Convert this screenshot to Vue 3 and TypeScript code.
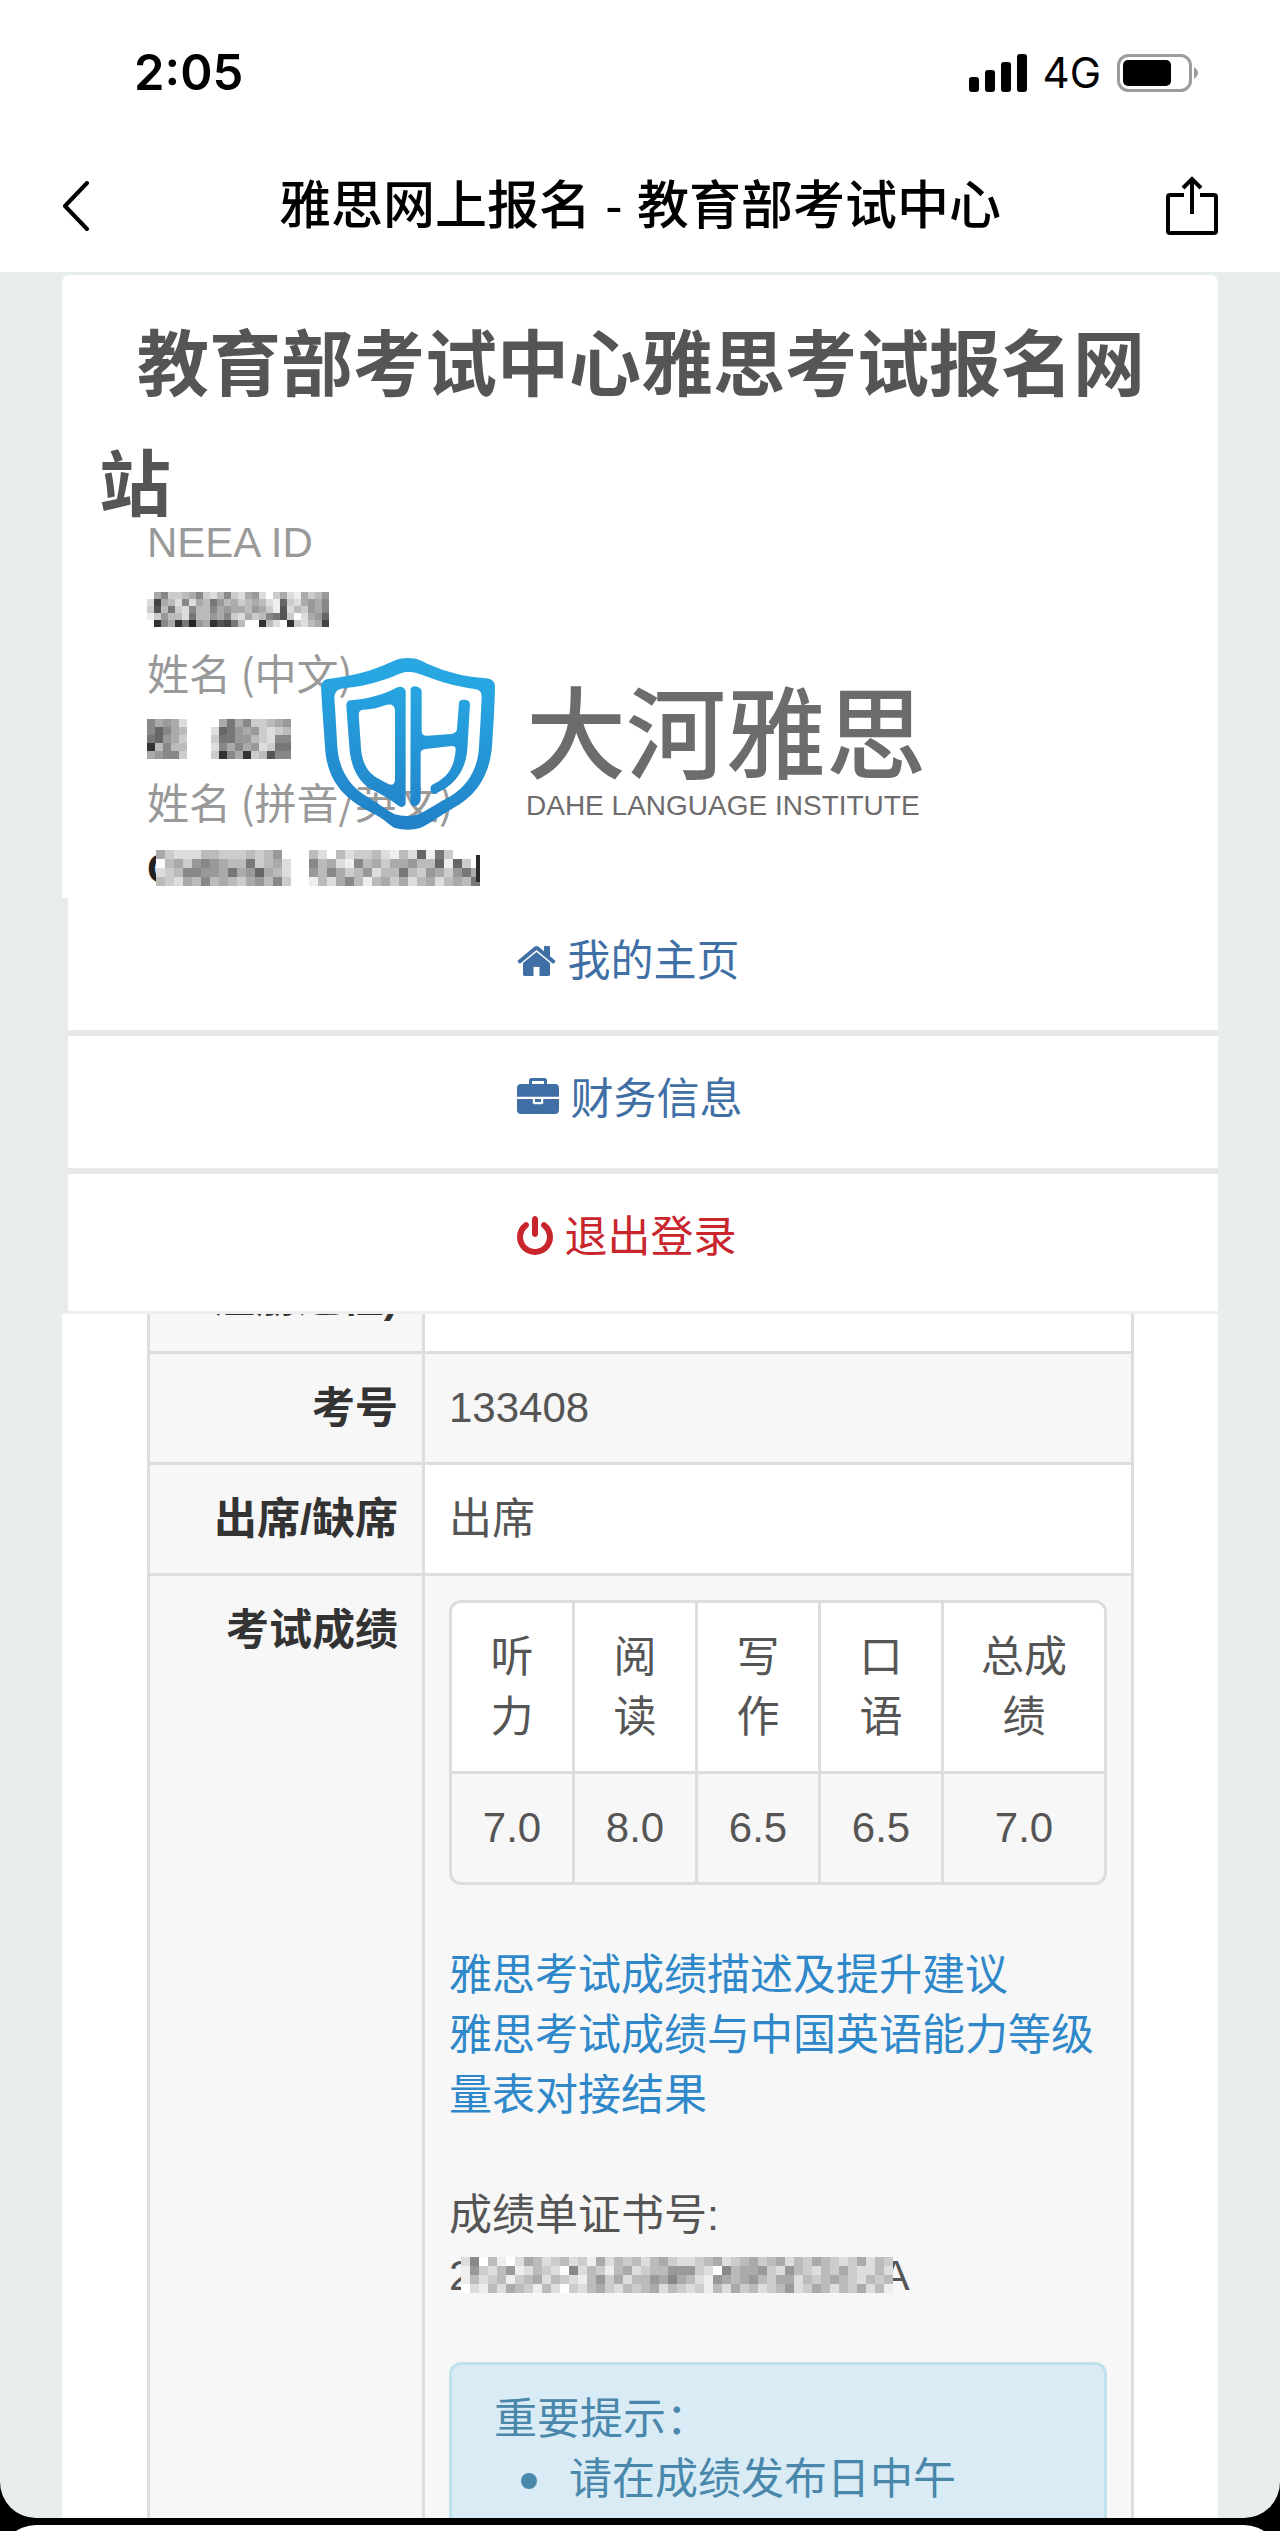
<script setup lang="ts">
interface MenuItem {
  label: string
  icon: string
  box: string
  width: number
  danger?: boolean
}

interface MosaicBlock {
  cell: number
  rows: string[]
}

const menu: MenuItem[] = [
  {
    label: '我的主页',
    box: '64 0 1664 1792',
    width: 39,
    icon: 'M1472 992v480q0 26-19 45t-45 19h-384v-384h-256v384h-384q-26 0-45-19t-19-45v-480q0-1 .5-3t.5-3l575-474 575 474q1 2 1 6zm223-69l-62 74q-8 9-21 11h-3q-13 0-21-7l-692-577-692 577q-12 8-24 7-13-2-21-11l-62-74q-8-10-7-23.5t11-21.5l719-599q32-26 76-26t76 26l244 204v-195q0-14 9-23t23-9h192q14 0 23 9t9 23v408l219 182q10 8 11 21.5t-7 23.5z',
  },
  {
    label: '财务信息',
    box: '0 0 1792 1792',
    width: 42,
    icon: 'M640 256h512v-128h-512v128zm1152 640v480q0 66-47 113t-113 47h-1472q-66 0-113-47t-47-113v-480h672v160q0 26 19 45t45 19h320q26 0 45-19t19-45v-160h672zm-768 0v128h-256v-128h256zm768-480v384h-1792v-384q0-66 47-113t113-47h352v-160q0-40 28-68t68-28h576q40 0 68 28t28 68v160h352q66 0 113 47t47 113z',
  },
  {
    label: '退出登录',
    box: '128 0 1536 1792',
    width: 36,
    danger: true,
    icon: 'M1664 896q0 156-61 298t-164 245-245 164-298 61-298-61-245-164-164-245-61-298q0-182 80.500-343t226.500-270q43-32 95.500-25t83.500 50q32 42 24.500 94.500t-49.500 84.500q-98 74-151.500 181t-53.500 228q0 104 40.500 198.500t109.500 163.500 163.500 109.500 198.500 40.500 198.500-40.500 163.500-109.500 109.500-163.500 40.500-198.500q0-121-53.500-228t-151.500-181q-42-32-49.500-84.500t24.500-94.500q31-43 84-50t95 25q146 109 226.500 270t80.500 343zm-640-768v640q0 52-38 90t-90 38-90-38-38-90v-640q0-52 38-90t90-38 90 38 38 90z',
  },
]

const scores = [
  { name: '听力', value: '7.0' },
  { name: '阅读', value: '8.0' },
  { name: '写作', value: '6.5' },
  { name: '口语', value: '6.5' },
  { name: '总成绩', value: '7.0' },
]

// Each character is a grey level from 0 (black) to f (white); "." leaves the cell empty.
const idMask: MosaicBlock = {
  cell: 7,
  rows: [
    '.a8ccba8cdb8cda9dfcadeacb9',
    'd4abd8dab79bacbabde6cda9a8',
    'c5b7cd8bb8a9aab9ace5dbc9a8',
    'ec9bbd7bb9a8cdacb875cfda96',
    '.38a3729a3547b.f3bdf3cdba4',
  ],
}
const nameMask: MosaicBlock = {
  cell: 8,
  rows: ['8a9ad..a7a8ccba9', '868ab.d679a9cdcb', '769ac.c7799bcd88', '3b8bb.d8a8a9dc77', 'a988c.c38a3cb588'].map(
    (row) => row.replace('.', '...'),
  ),
}
const pinyinMask: MosaicBlock = {
  cell: 9,
  rows: [
    'acdddbbcccbcb9f.fbdfbdccbdebd6e7c..',
    'fbac989abb7cbad.f8bade8bacaa9bb6e6c.',
    'dcb8899a7a96abd.f9b8acb9dbb7bc9ac97a',
    'bcdab8babca9b8c.febda8bebacadbadbab7',
  ],
}
const certMask: MosaicBlock = {
  cell: 9,
  rows: [
    'd8fbefdabdcbdceadbcbdbacddcbadcbacbadbcabcdcadbc',
    'e9cdb9edbcdf8dbcebadcbb999cdf8baa9cd9bcdbcacddbd',
    'ebdcbecbadbcdeb9cadbb9a8abde9aba9bcaadbcbabcdbcb',
    'fdebdabcebdfcdbacdbcbadbcdcebdacbdcb9dcabdbcadbe',
  ],
}

const shade = (c: string): string => `#${c.repeat(6)}`
const cells = (block: MosaicBlock) =>
  block.rows.flatMap((row, y) =>
    [...row].flatMap((c, x) => (c === '.' ? [] : [{ key: `${x}-${y}`, x, y, fill: shade(c) }])),
  )
const columns = (block: MosaicBlock): number => Math.max(...block.rows.map((r) => r.length))
</script>

<template>
  <div class="phone">
    <header class="top">
      <div class="status">
        <span class="time">2:05</span>
        <span class="indicators">
          <svg class="signal" viewBox="0 0 58 38" aria-hidden="true">
            <rect x="0" y="23" width="10" height="15" rx="3" />
            <rect x="16" y="16" width="10" height="22" rx="3" />
            <rect x="32" y="8" width="10" height="30" rx="3" />
            <rect x="48" y="0" width="10" height="38" rx="3" />
          </svg>
          <span class="network">4G</span>
          <svg class="battery" viewBox="0 0 82 38" aria-hidden="true">
            <rect x="1.500" y="1.500" width="72" height="35" rx="10" fill="none" stroke="#9c9c9c" stroke-width="3" />
            <rect x="6" y="6" width="48" height="26" rx="5" />
            <path d="M77 13q8 6 0 12z" fill="#9c9c9c" />
          </svg>
        </span>
      </div>
      <nav class="bar">
        <button type="button" aria-label="返回">
          <svg width="28" height="50" viewBox="0 0 28 50"><path d="M25 2L3 25l22 23" fill="none" stroke="#000" stroke-width="4" stroke-linecap="round" stroke-linejoin="round" /></svg>
        </button>
        <h1>雅思网上报名 - 教育部考试中心</h1>
        <button type="button" aria-label="分享">
          <svg width="52" height="60" viewBox="0 0 52 60">
            <path d="M18 19H4q-2 0-2 2v34q0 2 2 2h44q2 0 2-2V21q0-2-2-2H34M26 38V3M17 12l9-9 9 9" fill="none" stroke="#000" stroke-width="4" />
          </svg>
        </button>
      </nav>
    </header>

    <main class="page">
      <section class="panel">
        <h2>教育部考试中心雅思考试报名网站</h2>
        <dl>
          <dt>NEEA ID</dt>
          <dd>
            <svg :width="columns(idMask) * idMask.cell" :height="idMask.rows.length * idMask.cell" :viewBox="`0 0 ${columns(idMask)} ${idMask.rows.length}`" shape-rendering="crispEdges" aria-hidden="true">
              <rect v-for="c in cells(idMask)" :key="c.key" :x="c.x" :y="c.y" width="1" height="1" :fill="c.fill" />
            </svg>
          </dd>
          <dt class="cjk">姓名 (中文)</dt>
          <dd>
            <svg :width="columns(nameMask) * nameMask.cell" :height="nameMask.rows.length * nameMask.cell" :viewBox="`0 0 ${columns(nameMask)} ${nameMask.rows.length}`" shape-rendering="crispEdges" aria-hidden="true">
              <rect v-for="c in cells(nameMask)" :key="c.key" :x="c.x" :y="c.y" width="1" height="1" :fill="c.fill" />
            </svg>
          </dd>
          <dt class="cjk">姓名 (拼音/英文)</dt>
          <dd>
            <span class="peek">C</span>
            <svg class="cover" :width="columns(pinyinMask) * pinyinMask.cell" :height="pinyinMask.rows.length * pinyinMask.cell" :viewBox="`0 0 ${columns(pinyinMask)} ${pinyinMask.rows.length}`" shape-rendering="crispEdges" aria-hidden="true">
              <rect v-for="c in cells(pinyinMask)" :key="c.key" :x="c.x" :y="c.y" width="1" height="1" :fill="c.fill" />
              <rect x="35.500" y="0.500" width="0.500" height="3" fill="#2b2b2b" />
            </svg>
          </dd>
        </dl>

        <div class="brand">
          <svg class="shield" viewBox="664 234 522 516" aria-hidden="true">
            <defs>
              <linearGradient id="shieldFill" gradientUnits="userSpaceOnUse" x1="960" y1="234" x2="900" y2="750">
                <stop offset="0.150" stop-color="#27a6e2" />
                <stop offset="1" stop-color="#2180c6" />
              </linearGradient>
            </defs>
            <g fill="url(#shieldFill)" fill-rule="evenodd">
              <path d="M925 234C955 234 965 243 985 252C1040 276 1090 290 1160 295Q1187 298 1186 322C1184 400 1181 440 1177 500C1170 580 1135 645 1060 685C1020 708 990 732 962 744Q925 755 885 744C868 735 850 715 820 700C740 660 682 610 676 500C672 440 668 390 664 322Q664 298 690 296C760 288 820 272 880 244Q900 234 925 234ZM925 276C905 276 895 284 875 292C820 312 780 320 725 326Q704 330 704 352C708 410 710 450 713 500C718 570 750 620 805 652C840 672 860 690 885 703Q925 714 962 701C990 685 1020 665 1050 650C1110 615 1135 560 1138 500C1142 440 1144 400 1146 348Q1146 330 1125 327C1070 320 1030 308 970 286C955 280 945 276 925 276Z" />
              <path d="M752 361C800 358 850 345 893 322Q910 315 918 332V672Q912 686 897 678C875 660 840 640 810 625C770 600 752 550 749 500L740 378Q740 362 752 361ZM790 389C815 388 840 382 862 374Q884 370 886 390V600Q884 618 868 613C840 598 820 590 805 570C785 540 784 510 783 490L777 405Q777 390 790 389Z" />
              <path d="M933 325Q940 315 955 321Q966 326 966 335V455Q968 468 982 467L1055 462Q1071 459 1072 447L1078 368Q1080 358 1092 359Q1110 359 1111 372L1104 490C1103 560 1075 610 1010 640Q990 645 993 622C993 615 1005 610 1015 605C1050 585 1066 550 1068 508Q1068 498 1056 498L978 507Q963 508 963 520V660Q960 676 945 679Q934 678 932 668Z" />
            </g>
          </svg>
          <div class="wordmark">
            <strong>大河雅思</strong>
            <span>DAHE LANGUAGE INSTITUTE</span>
          </div>
        </div>

        <ul class="menu">
          <li v-for="item in menu" :key="item.label">
            <a href="#" :class="{ danger: item.danger }">
              <svg :width="item.width" height="42" :viewBox="item.box" aria-hidden="true"><path :d="item.icon" /></svg>
              <span>{{ item.label }}</span>
            </a>
          </li>
        </ul>
      </section>

      <section class="record">
        <table class="details">
          <colgroup>
            <col class="label-col" />
            <col />
          </colgroup>
          <tbody>
            <tr>
              <th scope="row">注册过程)</th>
              <td></td>
            </tr>
            <tr class="striped">
              <th scope="row">考号</th>
              <td class="number">133408</td>
            </tr>
            <tr>
              <th scope="row">出席/缺席</th>
              <td>出席</td>
            </tr>
            <tr class="striped last">
              <th scope="row">考试成绩</th>
              <td>
                <table class="scores">
                  <thead>
                    <tr>
                      <th v-for="s in scores" :key="s.name" scope="col">{{ s.name }}</th>
                    </tr>
                  </thead>
                  <tbody>
                    <tr>
                      <td v-for="s in scores" :key="s.name" class="number">{{ s.value }}</td>
                    </tr>
                  </tbody>
                </table>
                <p class="links">
                  <a href="#">雅思考试成绩描述及提升建议</a>
                  <a href="#">雅思考试成绩与中国英语能力等级量表对接结果</a>
                </p>
                <p class="cert-label">成绩单证书号:</p>
                <p class="cert">
                  <span>2</span>
                  <svg :width="columns(certMask) * certMask.cell" :height="certMask.rows.length * certMask.cell" :viewBox="`0 0 ${columns(certMask)} ${certMask.rows.length}`" shape-rendering="crispEdges" aria-hidden="true">
                    <rect v-for="c in cells(certMask)" :key="c.key" :x="c.x" :y="c.y" width="1" height="1" :fill="c.fill" />
                  </svg>
                  <span>A</span>
                </p>
                <div class="notice">
                  <p>重要提示：</p>
                  <ul>
                    <li>请在成绩发布日中午</li>
                  </ul>
                </div>
              </td>
            </tr>
          </tbody>
        </table>
      </section>
    </main>
  </div>
  <div class="next"><div class="next-sheet"></div></div>
</template>

<style>
body {
  margin: 0;
  background: #000;
}
</style>

<style scoped>
* {
  box-sizing: border-box;
}

.phone {
  overflow: hidden;
  border-radius: 0 0 36px 36px;
  background: #e8eded;
  color: #555;
  font: 43px/60px "Liberation Sans", "Noto Sans CJK SC", sans-serif;
}

h1,
h2,
p,
dl,
dd,
ul {
  margin: 0;
  padding: 0;
}

a {
  text-decoration: none;
}

.top {
  background: #fff;
  color: #000;
}

.status {
  display: flex;
  justify-content: space-between;
  align-items: center;
  height: 140px;
  padding: 36px 81px 30px 134px;
  font-family: Inter, sans-serif;
}

.time {
  font-size: 49px;
  font-weight: 600;
}

.indicators {
  display: flex;
  align-items: center;
}

.signal {
  width: 58px;
  height: 38px;
}

.network {
  margin: 0 16px;
  font-size: 42px;
}

.battery {
  width: 82px;
  height: 38px;
}

.bar {
  display: flex;
  justify-content: space-between;
  align-items: center;
  height: 132px;
  padding: 0 62px;
}

.bar button {
  display: flex;
  width: 52px;
  padding: 0;
  border: 0;
  background: none;
}

.bar h1 {
  font: 500 52px/60px "Liberation Sans", "Noto Sans CJK SC", sans-serif;
}

.page {
  padding: 3px 62px 0;
}

.panel {
  position: relative;
  padding-top: 24px;
  border-radius: 8px 8px 0 0;
  background: #fff;
}

.panel h2 {
  padding: 0 37px;
  font: 700 72px/120px "Noto Sans CJK SC", sans-serif;
  text-indent: 38px;
}

dl {
  margin-top: -28px;
  padding-left: 85px;
}

dt {
  color: #999;
  font-size: 42px;
  line-height: 64px;
}

.cjk {
  font-family: "Noto Sans CJK SC", sans-serif;
}

dd {
  display: flex;
  align-items: center;
  height: 65px;
  padding-top: 4px;
}

.peek {
  color: #222;
  font-weight: 700;
}

.cover {
  margin-left: -22px;
}

.brand {
  position: absolute;
  top: 383px;
  left: 259px;
  display: flex;
  color: #6e6b6c;
}

.shield {
  width: 174px;
  height: 172px;
}

.wordmark {
  display: flex;
  flex-direction: column;
  padding: 18px 0 0 31px;
}

.wordmark strong {
  font: 500 100px/104px "Noto Sans CJK SC", sans-serif;
}

.wordmark span {
  padding-top: 6px;
  font-size: 28px;
  line-height: 40px;
}

.menu {
  padding-bottom: 5px;
  border-bottom: 3px solid #eee;
  border-left: 6px solid #e8eaec;
  list-style: none;
}

.menu li {
  padding: 33px 0 39px 39%;
}

.menu li + li {
  border-top: 6px solid #e7e7e7;
}

.menu a {
  display: flex;
  align-items: center;
  gap: 12px;
  color: #3f6fa5;
}

.menu svg {
  fill: currentColor;
}

.menu .danger {
  color: #c9252d;
}

.record {
  overflow: hidden;
  padding: 0 84px 0 85px;
  background: #fff;
}

table {
  width: 100%;
  border-spacing: 0;
  table-layout: fixed;
}

.details {
  margin-top: -74px;
  border-left: 3px solid #ddd;
}

.label-col {
  width: 275px;
}

.details > tbody > tr > th,
.details > tbody > tr > td {
  padding: 24px;
  border-top: 3px solid #ddd;
  border-right: 3px solid #ddd;
  vertical-align: top;
}

.details > tbody > tr > th {
  background: #f7f7f7;
  color: #333;
  text-align: right;
  white-space: nowrap;
}

.details > tbody > .striped > td {
  background: #f7f7f7;
}

.details > tbody > .last > td {
  padding-bottom: 0;
}

.number {
  font-size: 42px;
}

.scores {
  overflow: hidden;
  border: 3px solid #ddd;
  border-radius: 12px;
  text-align: center;
}

.scores th,
.scores td {
  width: 123px;
  padding: 24px;
  border-right: 3px solid #ddd;
}

.scores th {
  border-bottom: 3px solid #ddd;
  background: #fff;
  font-weight: 400;
}

.scores th:last-child,
.scores td:last-child {
  width: auto;
  border-right: 0;
}

.links {
  margin: 60px 0;
}

.links a {
  display: block;
  color: #2f88c9;
}

.cert {
  display: flex;
  align-items: center;
}

.cert svg {
  z-index: 1;
  margin: 0 -12px;
}

.notice {
  margin-top: 57px;
  padding: 24px 42px 9px;
  border: 3px solid #c0e2ec;
  border-bottom: 0;
  border-radius: 12px 12px 0 0;
  background: #d9ebf5;
  color: #4a88ab;
}

.notice ul {
  padding-left: 75px;
  list-style: none;
}

.notice li {
  position: relative;
}

.notice li::before {
  position: absolute;
  top: 24px;
  left: -48px;
  width: 16px;
  height: 16px;
  border-radius: 50%;
  background: currentColor;
  content: "";
}

.next {
  overflow: hidden;
  height: 13px;
  padding-top: 7px;
}

.next-sheet {
  height: 80px;
  border-radius: 36px;
  background: #fff;
}
</style>
